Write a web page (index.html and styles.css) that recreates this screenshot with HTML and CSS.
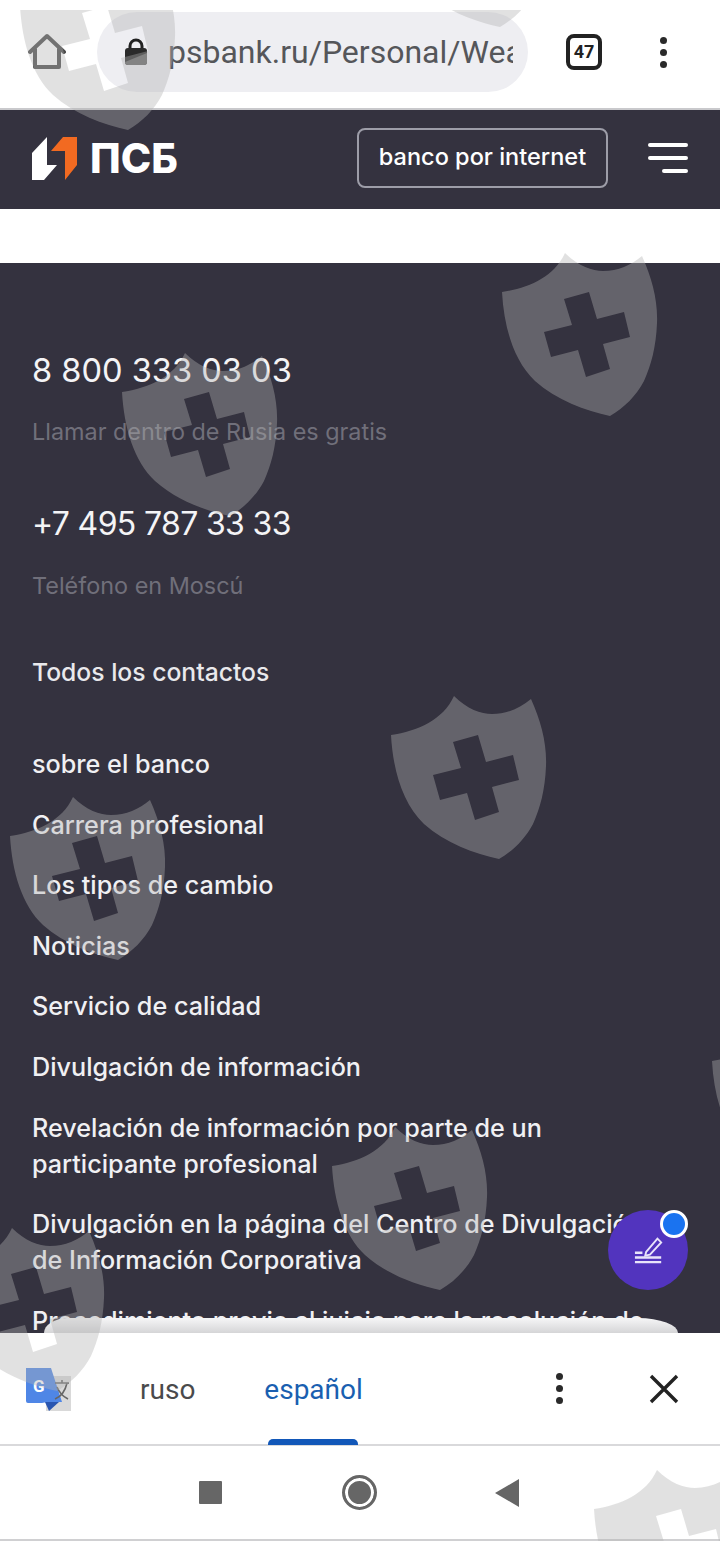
FILE: index.html
```html
<!DOCTYPE html>
<html lang="es">
<head>
<meta charset="utf-8">
<title>ПСБ</title>
<link rel="stylesheet" href="styles.css">
</head>
<body>
<svg class="defs" width="0" height="0" aria-hidden="true">
  <symbol id="shield" viewBox="0 0 156 165">
    <path fill-rule="evenodd" d="M0 39C27 35 52 24 63 0C76 13 90 18 101 18C116 18 129 12 140 3C150 25 156 48 155 70C154 95 149 112 142 128C134 143 122 155 108 163C84 158 54 147 33 128C12 108 2 75 0 39ZM62 46L87 39L95 66L122 59L128 84L101 91L108 116L84 124L76 97L49 104L42 79L70 72Z"/>
  </symbol>
</svg>
<div class="screen">
  <div class="browser">
    <svg class="home" viewBox="0 0 38 38"><path d="M2 19L19 3L36 19M7 16V34H31V16" fill="none" stroke="#4a4a4a" stroke-width="4" stroke-linejoin="round" stroke-linecap="round"/></svg>
    <div class="urlbar">
      <svg class="lock" viewBox="0 0 24 28"><path d="M6 12V8a6 6 0 0 1 12 0v4" fill="none" stroke="#222" stroke-width="3"/><rect x="1" y="10" width="22" height="17" rx="3" fill="#2a2a2a"/><path d="M1 24L23 15V24a3 3 0 0 1-3 3H4a3 3 0 0 1-3-3Z" fill="#666"/></svg>
      <span class="url">psbank.ru/Personal/Wealth</span>
    </div>
    <div class="tabs">47</div>
    <div class="kebab"><i></i><i></i><i></i></div>
  </div>
  <header class="site-head">
    <div class="brand">
      <svg class="brand-mark" viewBox="0 0 46 46"><path d="M0 18L15 2V30H25L12 45H0Z" fill="#fff"/><path d="M19 16L31 2H45V30L33 45V16Z" fill="#f26a21"/></svg>
      <span class="brand-name">ПСБ</span>
    </div>
    <a class="bank-btn">banco por internet</a>
    <div class="burger"><i></i><i></i><i class="short"></i></div>
  </header>
  <div class="strip"></div>
  <main class="footer">
    <div class="phone">8 800 333 03 03</div>
    <div class="note">Llamar dentro de Rusia es gratis</div>
    <div class="phone phone-two">+7 495 787 33 33</div>
    <div class="note">Teléfono en Moscú</div>
    <a class="contacts">Todos los contactos</a>
    <nav class="links">
      <a>sobre el banco</a>
      <a>Carrera profesional</a>
      <a>Los tipos de cambio</a>
      <a>Noticias</a>
      <a>Servicio de calidad</a>
      <a>Divulgación de información</a>
      <a>Revelación de información por parte de un participante profesional</a>
      <a>Divulgación en la página del Centro de Divulgación de Información Corporativa</a>
      <a>Procedimiento previo al juicio para la resolución de disputas</a>
    </nav>
    <div class="fab">
      <svg class="fab-icon" viewBox="0 0 32 32"><path d="M13 19L25 5L29 9L17 22L12 23Z" fill="none" stroke="#e9e4fa" stroke-width="2"/><path d="M1 20H9M1 25H29M1 30H29" stroke="#e9e4fa" stroke-width="2.6"/></svg>
      <span class="fab-dot"></span>
    </div>
  </main>
  <section class="translate">
    <div class="tab-lip"></div>
    <svg class="gt" viewBox="0 0 46 46"><rect x="20" y="10" width="25" height="35" fill="#d9d9d9"/><path d="M0 2H25L36 36H21L16 37V37H2a2 2 0 0 1-2-2Z" fill="#4f86e6"/><path d="M19 36H33L23 45Z" fill="#2a56b0"/><text x="7" y="26" class="gt-g">G</text><path d="M29 17H43M36 14V17M41 17C39 26 34 31 29 33M31 21C33 26 38 31 42 33" fill="none" stroke="#666" stroke-width="1.6"/></svg>
    <span class="lang">ruso</span>
    <span class="lang lang-on">español<b class="lang-bar"></b></span>
    <div class="kebab kebab-t"><i></i><i></i><i></i></div>
    <svg class="close" viewBox="0 0 30 30"><path d="M2 2L28 28M28 2L2 28" stroke="#222" stroke-width="3.4"/></svg>
  </section>
  <div class="sysnav">
    <span class="nav-square"></span>
    <span class="nav-circle"></span>
    <svg class="nav-back" viewBox="0 0 24 28"><path d="M24 0V28L0 14Z" fill="#666"/></svg>
  </div>
  <svg class="mark m1"><use href="#shield"/></svg>
  <svg class="mark m2"><use href="#shield"/></svg>
  <svg class="mark m3"><use href="#shield"/></svg>
  <svg class="mark m4"><use href="#shield"/></svg>
  <svg class="mark m5"><use href="#shield"/></svg>
  <svg class="mark m6"><use href="#shield"/></svg>
  <svg class="mark m7"><use href="#shield"/></svg>
  <svg class="mark m8"><use href="#shield"/></svg>
  <svg class="mark m9"><use href="#shield"/></svg>
  <svg class="mark m10"><use href="#shield"/></svg>
  <div class="status-cover"></div>
</div>
</body>
</html>
```
FILE: styles.css
```css
* { box-sizing: border-box; }
html, body { margin: 0; padding: 0; background: #fff; }
.defs { position: absolute; }
.screen {
  position: relative;
  width: 720px;
  height: 1541px;
  overflow: hidden;
  display: flex;
  flex-direction: column;
  font-family: Inter, "Noto Sans", sans-serif;
  background: #fff;
}
.status-cover { position: absolute; left: 0; top: 0; width: 100%; height: 10px; background: #fff; }

/* browser chrome */
.browser {
  height: 110px;
  flex: none;
  display: flex;
  align-items: center;
  padding: 0 0 4px 28px;
  border-bottom: 2px solid #c9c9cc;
  background: #fff;
}
.home { width: 38px; height: 38px; flex: none; }
.urlbar {
  width: 431px;
  height: 80px;
  margin-left: 31px;
  flex: none;
  border-radius: 40px;
  background: #eeeef2;
  display: flex;
  align-items: center;
  padding: 0 15px 0 27px;
  overflow: hidden;
}
.lock { width: 24px; height: 28px; flex: none; }
.url {
  margin-left: 20px;
  font: 400 32px/40px Roboto, sans-serif;
  color: #55565a;
  white-space: nowrap;
  overflow: hidden;
}
.tabs {
  width: 36px;
  height: 36px;
  margin-left: 38px;
  flex: none;
  border: 4px solid #222;
  border-radius: 8px;
  font: 700 18px/28px Roboto, sans-serif;
  text-align: center;
  color: #222;
}
.kebab {
  margin-left: 58px;
  display: flex;
  flex-direction: column;
  gap: 5px;
}
.kebab i { width: 7px; height: 7px; border-radius: 50%; background: #2a2a2a; display: block; }

/* site header */
.site-head {
  height: 99px;
  flex: none;
  display: flex;
  align-items: center;
  padding: 0 32px 4px;
  background: #34323f;
}
.brand { display: flex; align-items: center; gap: 12px; }
.brand-mark { width: 46px; height: 46px; flex: none; }
.brand-name { font: 800 41px/46px Inter, sans-serif; color: #fff; }
.bank-btn {
  margin-left: auto;
  width: 251px;
  height: 60px;
  border: 2px solid #9d9da8;
  border-radius: 8px;
  color: #fff;
  font-size: 23.5px;
  font-weight: 500;
  line-height: 54px;
  text-align: center;
}
.burger {
  width: 40px;
  margin-left: 40px;
  display: flex;
  flex-direction: column;
  align-items: flex-end;
  gap: 9px;
}
.burger i { width: 40px; height: 4px; border-radius: 2px; background: #fff; display: block; }
.burger .short { width: 26px; }

.strip { height: 54px; flex: none; background: #fff; }

/* footer */
.footer {
  position: relative;
  height: 1070px;
  flex: none;
  overflow: hidden;
  padding: 86px 32px 0;
  background: #34323f;
  color: #fff;
}
.phone { font-size: 32.6px; line-height: 42px; color: #f4f4f6; }
.phone-two { margin-top: 56px; font-size: 32px; letter-spacing: -0.65px; }
.note { margin-top: 26px; font-size: 23.4px; line-height: 30px; color: #706f7a; }
.contacts { display: block; margin-top: 56px; font-size: 24.7px; line-height: 30px; font-weight: 500; color: #e9e9ec; }
.links {
  margin-top: 59px;
  display: flex;
  flex-direction: column;
  gap: 24.6px;
}
.links a { max-width: 625px; font-size: 25.2px; line-height: 36px; font-weight: 500; color: #f0f0f3; }
.fab {
  position: absolute;
  left: 608px;
  top: 947px;
  width: 80px;
  height: 80px;
  border-radius: 50%;
  background: #5234be;
}
.fab-icon { position: absolute; left: 26px; top: 24px; width: 30px; height: 30px; }
.fab-dot {
  position: absolute;
  left: 52px;
  top: 0;
  width: 28px;
  height: 28px;
  border-radius: 50%;
  background: #1a73f0;
  border: 3px solid #fff;
}

/* translate sheet */
.translate {
  position: relative;
  height: 113px;
  flex: none;
  display: flex;
  align-items: center;
  padding-top: 3px;
  background: #fff;
  border-bottom: 2px solid #d9d9db;
}
.tab-lip {
  position: absolute;
  left: 44px;
  right: 42px;
  top: -15px;
  height: 15px;
  border-radius: 24px 40px 0 0 / 15px 15px 0 0;
  background: linear-gradient(#f6f6f7, #d5d5d7);
}
.gt { position: absolute; left: 26px; top: 33px; width: 46px; height: 46px; }
.gt-g { font: 700 17px Roboto, sans-serif; fill: #fff; }
.lang {
  font: 400 28px/34px Roboto, sans-serif;
  color: #4a4a4c;
  margin-left: 140px;
}
.lang-on {
  position: relative;
  margin-left: 69px;
  color: #1a5fb0;
}
.lang-bar {
  position: absolute;
  left: 4px;
  right: 5px;
  top: 66px;
  height: 6px;
  border-radius: 5px 5px 0 0;
  background: #1257b8;
}
.kebab-t { margin-left: 193px; margin-top: -4px; }
.close { position: absolute; left: 649px; top: 41px; width: 30px; height: 30px; }

/* system nav */
.sysnav {
  flex: 1;
  display: flex;
  align-items: center;
  padding-left: 199px;
  background: #fff;
  border-bottom: 2px solid #d0d0d2;
}
.nav-square { width: 23px; height: 23px; background: #666; border-radius: 1px; }
.nav-circle {
  width: 35px;
  height: 35px;
  margin-left: 120px;
  border-radius: 50%;
  background: #666;
  border: 3px solid #666;
  box-shadow: inset 0 0 0 3px #fff;
}
.nav-back { width: 24px; height: 28px; margin-left: 118px; }

/* watermark shields */
.mark {
  position: absolute;
  width: 156px;
  height: 165px;
  fill: rgba(178, 178, 178, 0.39);
  pointer-events: none;
}
.m1 { left: 502px; top: 253px; }
.m2 { left: 122px; top: 353px; }
.m3 { left: 391px; top: 696px; }
.m4 { left: 10px; top: 797px; }
.m5 { left: 332px; top: 1127px; }
.m6 { left: -51px; top: 1228px; }
.m7 { left: 20px; top: -33px; }
.m8 { left: 392px; top: -136px; }
.m9 { left: 712px; top: 1022px; }
.m10 { left: 594px; top: 1470px; }
```
